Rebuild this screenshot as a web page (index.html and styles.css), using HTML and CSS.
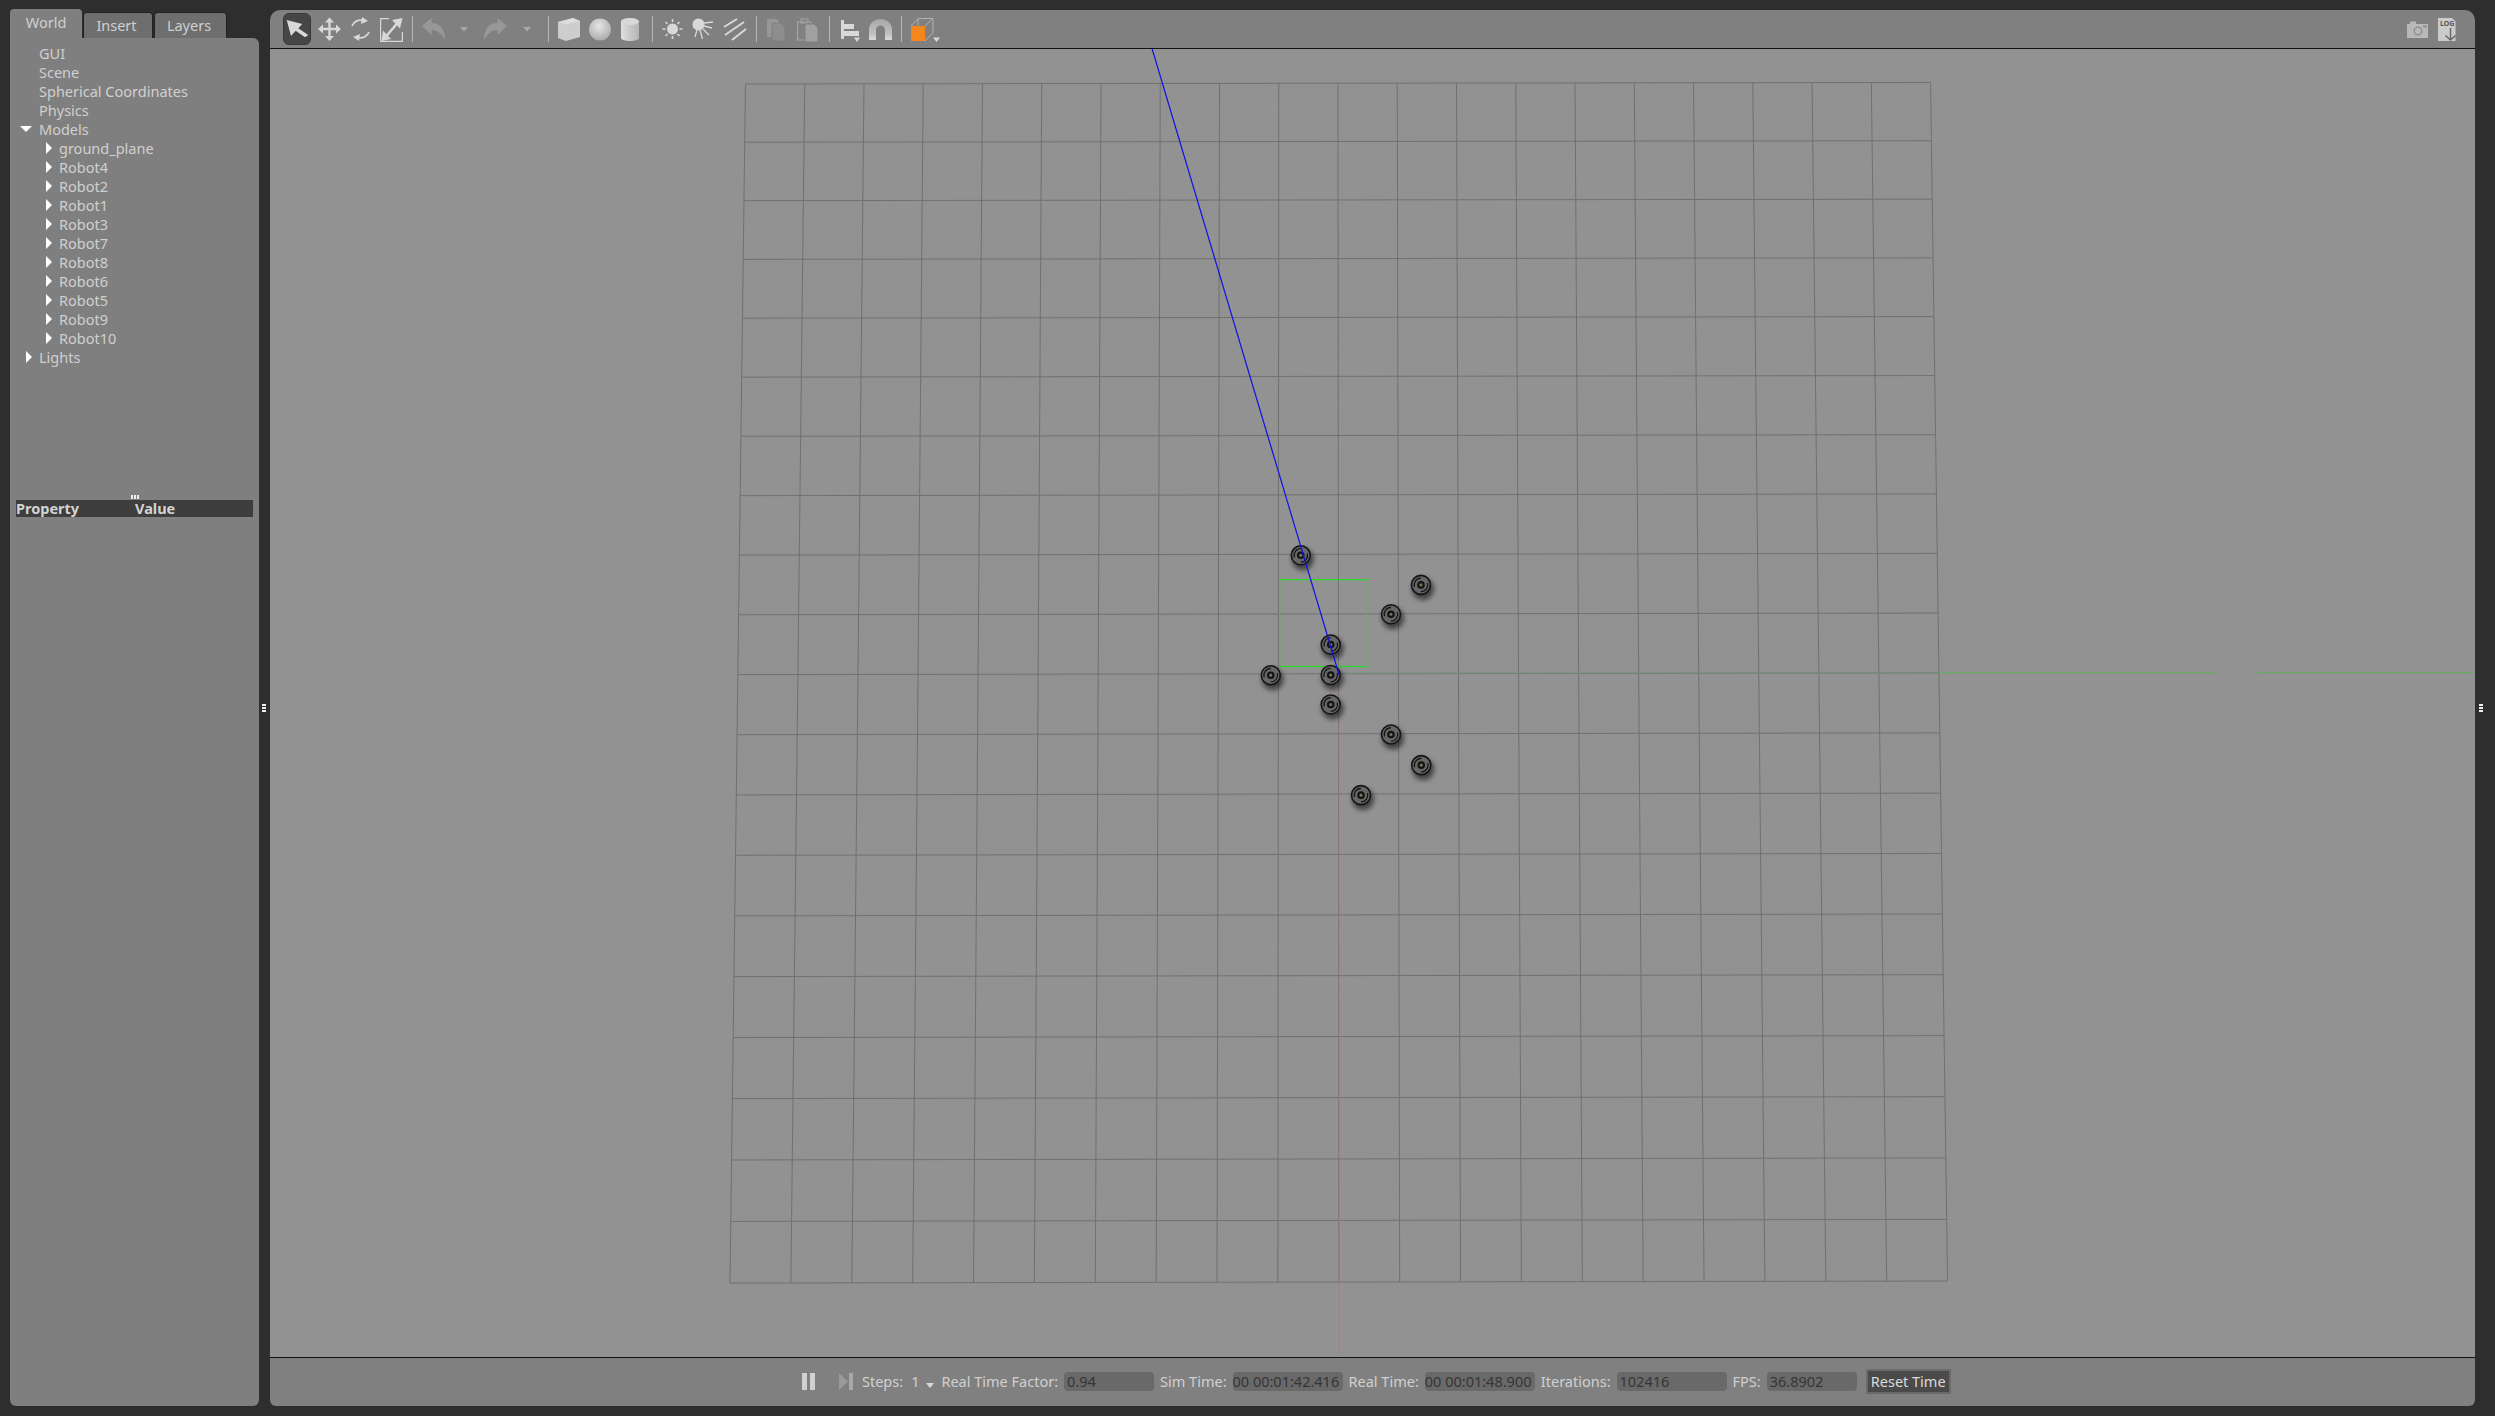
FILE: index.html
```html
<!DOCTYPE html>
<html lang="en">
<head>
    <meta charset="utf-8">
    <title>Gazebo</title>
    <link rel="stylesheet" href="styles.css">
</head>
<body>
    <div class="app">
        <aside class="side">
            <div class="tabs">
                <div class="tab active">World</div>
                <div class="tab">Insert</div>
                <div class="tab wide">Layers</div>
            </div>
            <div class="side-panel">
                <div class="tree">
                    <div class="row">GUI</div>
                    <div class="row">Scene</div>
                    <div class="row">Spherical Coordinates</div>
                    <div class="row">Physics</div>
                    <div class="row"><span class="arrow-down"></span>Models</div>
                    <div class="row child"><span class="arrow-right"></span>ground_plane</div>
                    <div class="row child"><span class="arrow-right"></span>Robot4</div>
                    <div class="row child"><span class="arrow-right"></span>Robot2</div>
                    <div class="row child"><span class="arrow-right"></span>Robot1</div>
                    <div class="row child"><span class="arrow-right"></span>Robot3</div>
                    <div class="row child"><span class="arrow-right"></span>Robot7</div>
                    <div class="row child"><span class="arrow-right"></span>Robot8</div>
                    <div class="row child"><span class="arrow-right"></span>Robot6</div>
                    <div class="row child"><span class="arrow-right"></span>Robot5</div>
                    <div class="row child"><span class="arrow-right"></span>Robot9</div>
                    <div class="row child"><span class="arrow-right"></span>Robot10</div>
                    <div class="row"><span class="arrow-right"></span>Lights</div>
                </div>
                <div class="prop-handle"></div>
                <div class="prop-header">
                    <div class="prop-name">Property</div>
                    <div>Value</div>
                </div>
            </div>
        </aside>
        <div class="splitter"><div class="grip"></div></div>
        <main class="main">
            <div class="toolbar">
                <div class="tool-active">
                    <svg width="28" height="32" viewBox="0 0 28 32"><polygon class="ic" points="3.7,7 19.3,11 15.3,15.3 25.3,22 22,24.3 12.7,17.7 8,23"/></svg>
                </div>
                <svg width="23" height="30" viewBox="0 0 23 30">
                    <path class="ln" stroke-width="2.4" d="M11.5 6V24M3 15H20"/>
                    <polygon class="ic" points="11.5,3.5 7,8.5 16,8.5"/><polygon class="ic" points="11.5,27 7,22 16,22"/>
                    <polygon class="ic" points="0,15 5,10.5 5,19.5"/><polygon class="ic" points="23,15 18,10.5 18,19.5"/>
                </svg>
                <svg width="21" height="30" viewBox="0 0 21 30">
                    <path class="ln" stroke-width="1.8" d="M2 12A9 9 0 0 1 13 6.5M19 18A9 9 0 0 1 8 23.5"/>
                    <polygon class="ic" points="12,3 18,7 11,10"/><polygon class="ic" points="9,27 3,23 10,20"/>
                </svg>
                <svg width="23" height="30" viewBox="0 0 23 30">
                    <path class="ln" stroke-width="1.2" d="M9 4.6H.6V27.4H22.4V18"/>
                    <path class="ln" stroke-width="2.6" d="M6 22.5L17 9.5"/>
                    <polygon class="ic" points="22.5,4 12,6 20,14.5"/><polygon class="ic" points="1.5,27 3,16.5 11,25"/>
                </svg>
                <div class="sep"></div>
                <svg width="53" height="30" viewBox="0 0 53 30">
                    <path class="dim" d="M0 12L9.5 4V9C18 9 23 15 23 26C19 19 15 16 9.500 16V21Z"/>
                    <polygon class="caret" points="38,13 46,13 42,17.500"/>
                </svg>
                <svg width="55" height="30" viewBox="0 0 55 30">
                    <path class="dim" d="M23 12L13.500 4V9C5 9 0 15 0 26C4 19 8 16 13.500 16V21Z"/>
                    <polygon class="caret" points="39,13 47,13 43,17.500"/>
                </svg>
                <div class="sep"></div>
                <svg width="22" height="30" viewBox="0 0 22 30">
                    <polygon fill="#cdcdcd" points="0,8 15,4 22,7 22,23 8,27 0,24"/>
                    <polygon fill="#dcdcdc" points="0,8 15,4 22,7 8,10.500"/>
                </svg>
                <svg width="22" height="30" viewBox="0 0 22 30">
                    <defs>
                        <radialGradient id="ball" cx="0.45" cy="0.35" r="0.7"><stop offset="0" stop-color="#e6e6e6"/><stop offset="1" stop-color="#a8a8a8"/></radialGradient>
                        <linearGradient id="can"><stop offset="0" stop-color="#dedede"/><stop offset="1" stop-color="#b4b4b4"/></linearGradient>
                    </defs>
                    <circle cx="11" cy="15.500" r="11" fill="url(#ball)"/>
                </svg>
                <svg width="23" height="30" viewBox="0 0 23 30">
                    <path fill="url(#can)" d="M1 8C1 3 19 3 19 8V24C19 28 1 28 1 24Z"/>
                    <ellipse cx="10" cy="7.500" rx="9" ry="3.500" fill="#d8d8d8"/>
                </svg>
                <div class="sep"></div>
                <svg width="21" height="30" viewBox="0 0 21 30">
                    <circle class="ic" cx="10.500" cy="15" r="5.500"/>
                    <path class="ln" stroke-width="1.600" d="M10.500 5V8M10.500 22V25M.5 15H3.500M17.500 15H20.500M3.500 8L5.500 10M15.500 20L17.500 22M17.500 8L15.500 10M5.500 20L3.500 22"/>
                </svg>
                <svg width="22" height="30" viewBox="0 0 22 30">
                    <circle class="ic" cx="6.500" cy="10.500" r="6"/>
                    <path class="ln" stroke-width="1.300" d="M12 9L21 8M12 12L20 14M11 15L17 21M8 16L10.500 25M5 16L3 23"/>
                </svg>
                <svg width="24" height="30" viewBox="0 0 24 30">
                    <path class="ln" stroke-width="2" d="M1 13L14 5M2 21L21 8M9 26L23 15"/>
                </svg>
                <div class="sep"></div>
                <svg width="20" height="30" viewBox="0 0 20 30">
                    <path fill="#979797" d="M1 5H10L13 8V23H1Z"/>
                    <path fill="#8d8d8d" stroke="#7f7f7f" d="M6 9H15L19 13V27H6Z"/>
                </svg>
                <svg width="25" height="30" viewBox="0 0 25 30">
                    <path fill="none" stroke="#a5a5a5" stroke-width="1.200" d="M2.600 8H16V26H2.600Z"/>
                    <rect x="6" y="5" width="7" height="4" fill="none" stroke="#a5a5a5"/>
                    <path fill="#a0a0a0" stroke="#7f7f7f" d="M10 10H19L23 14V28H10Z"/>
                </svg>
                <div class="sep"></div>
                <svg width="21" height="30" viewBox="0 0 21 30">
                    <rect class="ic" x="2" y="6" width="3" height="19"/>
                    <rect class="ic" x="5" y="10" width="10" height="5"/>
                    <rect class="ic" x="5" y="17" width="15" height="5"/>
                    <polygon class="ic" points="15,23.500 21,23.500 18,28"/>
                </svg>
                <svg width="23" height="30" viewBox="0 0 23 30">
                    <defs><linearGradient id="mag" x1="0" y1="0" x2="0" y2="1"><stop offset="0" stop-color="#a8a8a8"/><stop offset="0.7" stop-color="#c0c0c0"/><stop offset="1" stop-color="#dcdcdc"/></linearGradient></defs>
                    <path fill="url(#mag)" d="M0 26V15.500A11.500 10.500 0 0 1 23 15.500V26H16V16A4.500 4.500 0 0 0 7 16V26Z"/>
                </svg>
                <div class="sep"></div>
                <svg width="30" height="30" viewBox="0 0 30 30">
                    <path fill="none" stroke="#b0b0b0" d="M7 4.500H22V19L14 27M7 4.500L0 12M22 4.500L14 12M7 4.500V12"/>
                    <rect x="0" y="12" width="14" height="15" fill="#f5861e"/>
                    <polygon class="ic" points="22,23.500 29,23.500 25.500,28"/>
                </svg>
                <div class="tool-right">
                    <svg width="21" height="30" viewBox="0 0 21 30">
                        <path fill="#b8b8b8" d="M0 10H3V7.500H9V10H21V24H0Z"/>
                        <circle cx="11" cy="17" r="3.800" fill="none" stroke="#8a8a8a" stroke-width="1.300"/>
                        <rect x="16" y="11.500" width="4" height="2" fill="#8f8f8f"/>
                    </svg>
                    <svg width="18" height="30" viewBox="0 0 18 30">
                        <path fill="#cbcbcb" d="M0 4H14L17.500 7.500V27H0Z"/>
                        <text class="log-text" x="2" y="12">LOG</text>
                        <path stroke="#666" stroke-width="1.500" d="M12.500 14V25"/>
                        <path fill="none" stroke="#666" stroke-width="1.500" d="M7.500 21.500L12.500 26L17.500 21.500"/>
                    </svg>
                </div>
            </div>
            <div class="viewport">
                <svg class="scene" viewBox="270 49 2205 1309">
                    <defs>
                        <filter id="soft" x="-50%" y="-50%" width="200%" height="200%"><feGaussianBlur stdDeviation="2.500"/></filter>
                        <g id="robot">
                            <circle cx="2" cy="4" r="11" fill="#000" opacity="0.55" filter="url(#soft)"/>
                            <circle r="9.500" fill="#666" stroke="#141414" stroke-width="1.600"/>
                            <path d="M-6.500 2A6.800 6.800 0 0 1 0 -6.800M6.500 -2A6.800 6.800 0 0 1 0 6.800" fill="none" stroke="#111" stroke-width="1.200"/>
                            <circle r="2.700" fill="#77775a" stroke="#141414" stroke-width="2.200"/>
                        </g>
                    </defs>
                    <!-- ground plane grid -->
                    <path class="grid" d="M745 84L1931 82.500M744.200 142.300L1931.800 140.800M743.500 200.800L1932.700 199.300M742.700 259.500L1933.500 258M742 318.400L1934.300 316.800M741.200 377.400L1935.200 375.800M740.400 436.600L1936 435M739.700 496L1936.800 494.300M738.900 555.500L1937.700 553.800M738.100 615.200L1938.500 613.500M737.400 675.100L1939.400 673.400M736.600 735.200L1940.200 733.400M735.800 795.500L1941.100 793.700M735 855.900L1941.900 854.100M734.200 916.500L1942.800 914.700M733.500 977.300L1943.700 975.400M732.700 1038.300L1944.500 1036.400M731.900 1099.400L1945.400 1097.500M731.100 1160.800L1946.300 1158.800M730.300 1222.300L1947.100 1220.300M729.500 1284L1948 1282"/>
                    <path class="grid" d="M745 84L729.500 1284M804.300 84L790.400 1284M863.600 84L851.400 1284M922.900 84L912.300 1284M982.200 84L973.200 1284M1041.500 83.600L1034.100 1283.500M1100.800 83.500L1095.100 1283.400M1160.100 83.500L1156 1283.300M1219.400 83.400L1216.900 1283.200M1278.700 83.300L1277.800 1283.100M1338 83.300L1338.800 1283M1397.300 83.200L1399.700 1282.900M1456.600 83.100L1460.600 1282.800M1515.900 83L1521.500 1282.700M1575.200 83L1582.500 1282.600M1634.500 82.900L1643.400 1282.500M1693.800 82.800L1704.300 1282.400M1753.100 82.700L1765.200 1282.300M1812.400 82.700L1826.200 1282.200M1871.700 82.600L1887.100 1282.100M1931 82.500L1948 1282"/>
                    <!-- world axes -->
                    <path class="axis-x" d="M1339 673.500H1940"/>
                    <path class="axis-x-bright" d="M1940 673.200H2218M2258 673H2475"/>
                    <path class="axis-y" d="M1339 676V1357"/>
                    <rect class="select-box" x="1279.500" y="580" width="88" height="87"/>
                    <use href="#robot" x="1300.700" y="555.700"/>
                    <use href="#robot" x="1421" y="585.300"/>
                    <use href="#robot" x="1391" y="614.700"/>
                    <use href="#robot" x="1330.700" y="645"/>
                    <use href="#robot" x="1270.700" y="675.700"/>
                    <use href="#robot" x="1330.700" y="675.500"/>
                    <use href="#robot" x="1330.700" y="705"/>
                    <use href="#robot" x="1391" y="735"/>
                    <use href="#robot" x="1421.300" y="765.700"/>
                    <use href="#robot" x="1361" y="795.700"/>
                    <path class="path-line" d="M1152 49L1339 675"/>
                </svg>
            </div>
            <div class="statusbar">
                <svg class="pause" width="13" height="17" viewBox="0 0 13 17"><rect width="5" height="17" fill="#d0d0d0"/><rect x="8" width="5" height="17" fill="#d0d0d0"/></svg>
                <svg class="step" width="14" height="17" viewBox="0 0 14 17"><polygon points="0,0 9,8.500 0,17" fill="#9a9a9a"/><rect x="10" width="4" height="17" fill="#a8a8a8"/></svg>
                <span class="label">Steps:</span>
                <span class="label steps-value">1</span>
                <span class="steps-caret"></span>
                <span class="label">Real Time Factor:</span>
                <span class="field short">0.94</span>
                <span class="label">Sim Time:</span>
                <span class="field time">00 00:01:42.416</span>
                <span class="label">Real Time:</span>
                <span class="field time">00 00:01:48.900</span>
                <span class="label">Iterations:</span>
                <span class="field time pad">102416</span>
                <span class="label">FPS:</span>
                <span class="field short">36.8902</span>
                <button class="reset">Reset Time</button>
            </div>
        </main>
        <div class="splitter right"><div class="grip"></div></div>
    </div>
</body>
</html>
```

FILE: styles.css
```css
* {
    box-sizing: border-box;
}
html, body {
    margin: 0;
    height: 100%;
}
body {
    background-color: #2e2e2e;
    font-family: "Noto Sans", sans-serif;
    font-size: 14.5px;
    color: #d0d0d0;
    overflow: hidden;
}
.app {
    display: flex;
    height: 1416px;
    padding: 9px 0 10px 10px;
}

/* left panel */
.side {
    width: 249px;
    display: flex;
    flex-direction: column;
}
.tabs {
    display: flex;
    align-items: flex-end;
    height: 29px;
    gap: 1px;
}
.tab {
    width: 70px;
    height: 26px;
    padding: 0 3px 2px 0;
    display: flex;
    align-items: center;
    justify-content: center;
    background-color: #6e6e6e;
    border: 1px solid #222;
    border-bottom: none;
    border-radius: 4px 4px 0 0;
}
.tab.wide {
    width: 73px;
}
.tab.active {
    width: 72px;
    height: 29px;
    padding: 0 0 3px;
    background-color: #7f7f7f;
    border: none;
}
.side-panel {
    flex: 1;
    background-color: #7f7f7f;
    border-radius: 0 6px 6px 6px;
}
.tree {
    height: 457px;
    padding-top: 5px;
}
.row {
    height: 19px;
    display: flex;
    align-items: center;
    padding-left: 29px;
}
.row.child {
    padding-left: 49px;
}
.arrow-right {
    width: 0;
    height: 0;
    margin-left: -13px;
    margin-right: 7px;
    border-left: 6px solid #fff;
    border-top: 6px solid transparent;
    border-bottom: 6px solid transparent;
}
.arrow-down {
    width: 0;
    height: 0;
    margin-left: -19px;
    margin-right: 7px;
    border-top: 6px solid #fff;
    border-left: 6px solid transparent;
    border-right: 6px solid transparent;
}
.prop-handle {
    width: 8px;
    height: 4px;
    margin-left: 121px;
    background: repeating-linear-gradient(90deg, #eee 0, #eee 2px, #7f7f7f 2px, #7f7f7f 3px);
}
.prop-header {
    display: flex;
    align-items: center;
    height: 17px;
    margin: 1px 6px 0;
    padding-bottom: 1px;
    background-color: #3e3e3e;
    font-weight: bold;
    color: #d4d4d4;
}
.prop-name {
    width: 119px;
}

/* splitters */
.splitter {
    width: 11px;
    display: flex;
    align-items: center;
    padding-left: 3px;
}
.splitter.right {
    width: 20px;
    padding-left: 4px;
}
.grip {
    width: 4px;
    height: 8px;
    background: repeating-linear-gradient(180deg, #eee 0, #eee 2px, #2e2e2e 2px, #2e2e2e 3px);
}

/* main area */
.main {
    flex: 1;
    display: flex;
    flex-direction: column;
    margin-top: 1px;
}
.toolbar {
    height: 39px;
    display: flex;
    align-items: center;
    gap: 9px;
    padding: 0 19px 1px 13px;
    background-color: #808080;
    border-bottom: 1px solid #111;
    border-radius: 10px 10px 0 0;
}
.tool-active {
    width: 28px;
    height: 32px;
    margin-right: -2px;
    background-color: #464646;
    border-radius: 6px;
    border: 1px solid #3a3a3a;
}
.tool-active svg {
    display: block;
    margin: -1px;
}
.sep {
    width: 1px;
    height: 26px;
    background-color: #b4b4b4;
}
.ic {
    fill: #d8d8d8;
}
.ln {
    fill: none;
    stroke: #d8d8d8;
}
.dim {
    fill: #989898;
}
.caret {
    fill: #a8a8a8;
}
.log-text {
    font-size: 7px;
    font-weight: bold;
    fill: #555;
}
.tool-right {
    margin-left: auto;
    display: flex;
    gap: 10px;
}

/* 3d view */
.viewport {
    flex: 1;
    position: relative;
    background-color: #929292;
}
.scene {
    position: absolute;
    top: 0;
    left: 0;
    width: 100%;
    height: 100%;
}
.grid {
    fill: none;
    stroke: #707070;
    stroke-width: 1;
}
.axis-x {
    fill: none;
    stroke: #74927a;
    stroke-width: 1;
}
.axis-x-bright {
    fill: none;
    stroke: #5fb05f;
    stroke-width: 1;
}
.axis-y {
    fill: none;
    stroke: #b07a7a;
    stroke-width: 1;
    stroke-dasharray: 3 1;
}
.select-box {
    fill: none;
    stroke: #22dd22;
    stroke-width: 1.2;
}
.path-line {
    fill: none;
    stroke: #1010e4;
    stroke-width: 1.2;
}

/* bottom bar */
.statusbar {
    height: 49px;
    display: flex;
    align-items: center;
    gap: 6px;
    padding: 0 0 2px 532px;
    background-color: #808080;
    border-top: 1px solid #111;
    border-radius: 0 0 6px 6px;
}
.pause {
    margin-right: 18px;
}
.step {
    margin-right: 3px;
}
.steps-value {
    margin-left: 2px;
}
.steps-caret {
    width: 0;
    height: 0;
    margin: 8px 1px 0;
    border-top: 5px solid #d8d8d8;
    border-left: 4px solid transparent;
    border-right: 4px solid transparent;
}
.field {
    height: 19px;
    display: flex;
    align-items: center;
    background-color: #696969;
    border-radius: 4px;
    color: #353535;
}
.field.short {
    width: 90px;
    padding-left: 3px;
}
.field.time {
    width: 110px;
}
.field.pad {
    padding-left: 3px;
}
.reset {
    width: 85px;
    height: 25px;
    margin-left: 3px;
    padding: 0;
    background-color: #4a4a4a;
    border: 2px solid #6a6a6a;
    color: #dcdcdc;
    font-family: inherit;
    font-size: 14.5px;
}
```
